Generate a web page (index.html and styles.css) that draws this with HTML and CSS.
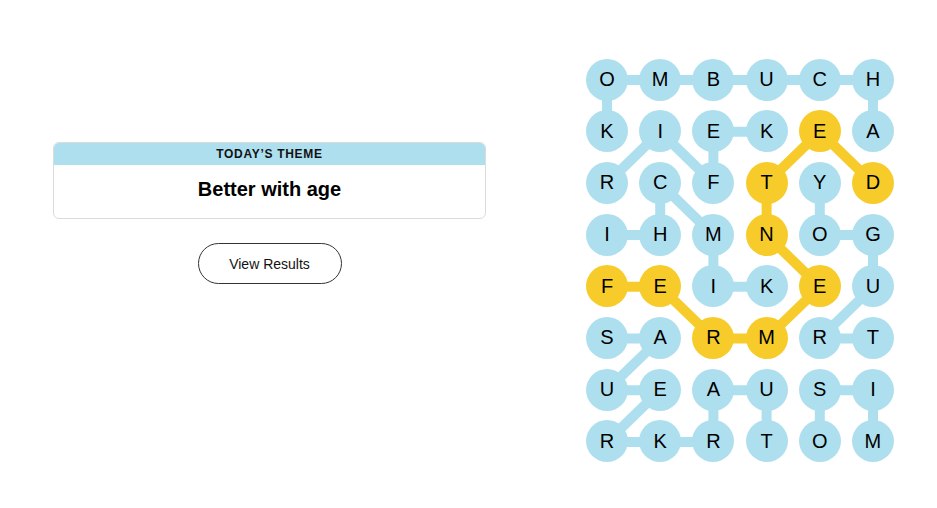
FILE: index.html
```html
<!DOCTYPE html>
<html lang="en">
<head>
<meta charset="utf-8">
<title>Strands</title>
<link rel="stylesheet" href="styles.css">
</head>
<body>
<main class="page">
  <section class="left">
    <div class="card">
      <div class="card-head">TODAY’S THEME</div>
      <div class="card-body">Better with age</div>
    </div>
    <button class="results-btn">View Results</button>
  </section>
  <section class="board">
    <svg class="links" width="308" height="404" viewBox="0 0 308 404">
      <g class="blue">
        <!-- KOMBUCHA -->
        <line x1="21" y1="72.7" x2="21" y2="21"/>
        <line x1="21" y1="21" x2="287" y2="21"/>
        <line x1="287" y1="21" x2="287" y2="72.7"/>
        <!-- KEFIR -->
        <line x1="180.6" y1="72.7" x2="127.4" y2="72.7"/>
        <line x1="127.4" y1="72.7" x2="127.4" y2="124.4"/>
        <line x1="127.4" y1="124.4" x2="74.2" y2="72.7"/>
        <line x1="74.2" y1="72.7" x2="21" y2="124.4"/>
        <!-- KIMCHI -->
        <line x1="180.6" y1="227.8" x2="127.4" y2="227.8"/>
        <line x1="127.4" y1="227.8" x2="127.4" y2="176.1"/>
        <line x1="127.4" y1="176.1" x2="74.2" y2="124.4"/>
        <line x1="74.2" y1="124.4" x2="74.2" y2="176.1"/>
        <line x1="74.2" y1="176.1" x2="21" y2="176.1"/>
        <!-- YOGURT -->
        <line x1="233.8" y1="124.4" x2="233.8" y2="176.1"/>
        <line x1="233.8" y1="176.1" x2="287" y2="176.1"/>
        <line x1="287" y1="176.1" x2="287" y2="227.8"/>
        <line x1="287" y1="227.8" x2="233.8" y2="279.5"/>
        <line x1="233.8" y1="279.5" x2="287" y2="279.5"/>
        <!-- SAUERKRAUT -->
        <line x1="21" y1="279.5" x2="74.2" y2="279.5"/>
        <line x1="74.2" y1="279.5" x2="21" y2="331.2"/>
        <line x1="21" y1="331.2" x2="74.2" y2="331.2"/>
        <line x1="74.2" y1="331.2" x2="21" y2="382.9"/>
        <line x1="21" y1="382.9" x2="127.4" y2="382.9"/>
        <line x1="127.4" y1="382.9" x2="127.4" y2="331.2"/>
        <line x1="127.4" y1="331.2" x2="180.6" y2="331.2"/>
        <line x1="180.6" y1="331.2" x2="180.6" y2="382.9"/>
        <!-- MISO -->
        <line x1="287" y1="382.9" x2="287" y2="331.2"/>
        <line x1="287" y1="331.2" x2="233.8" y2="331.2"/>
        <line x1="233.8" y1="331.2" x2="233.8" y2="382.9"/>
      </g>
      <g class="gold">
        <!-- FERMENTED -->
        <line x1="21" y1="227.8" x2="74.2" y2="227.8"/>
        <line x1="74.2" y1="227.8" x2="127.4" y2="279.5"/>
        <line x1="127.4" y1="279.5" x2="180.6" y2="279.5"/>
        <line x1="180.6" y1="279.5" x2="233.8" y2="227.8"/>
        <line x1="233.8" y1="227.8" x2="180.6" y2="176.1"/>
        <line x1="180.6" y1="176.1" x2="180.6" y2="124.4"/>
        <line x1="180.6" y1="124.4" x2="233.8" y2="72.7"/>
        <line x1="233.8" y1="72.7" x2="287" y2="124.4"/>
      </g>
    </svg>
    <div class="grid">
      <span class="cell">O</span><span class="cell">M</span><span class="cell">B</span><span class="cell">U</span><span class="cell">C</span><span class="cell">H</span>
      <span class="cell">K</span><span class="cell">I</span><span class="cell">E</span><span class="cell">K</span><span class="cell span">E</span><span class="cell">A</span>
      <span class="cell">R</span><span class="cell">C</span><span class="cell">F</span><span class="cell span">T</span><span class="cell">Y</span><span class="cell span">D</span>
      <span class="cell">I</span><span class="cell">H</span><span class="cell">M</span><span class="cell span">N</span><span class="cell">O</span><span class="cell">G</span>
      <span class="cell span">F</span><span class="cell span">E</span><span class="cell">I</span><span class="cell">K</span><span class="cell span">E</span><span class="cell">U</span>
      <span class="cell">S</span><span class="cell">A</span><span class="cell span">R</span><span class="cell span">M</span><span class="cell">R</span><span class="cell">T</span>
      <span class="cell">U</span><span class="cell">E</span><span class="cell">A</span><span class="cell">U</span><span class="cell">S</span><span class="cell">I</span>
      <span class="cell">R</span><span class="cell">K</span><span class="cell">R</span><span class="cell">T</span><span class="cell">O</span><span class="cell">M</span>
    </div>
  </section>
</main>
</body>
</html>
```

FILE: styles.css
```css
html, body {
  margin: 0;
  padding: 0;
  background: #ffffff;
}

body {
  font-family: "Liberation Sans", Arial, sans-serif;
  color: #000;
}

.page {
  display: flex;
  align-items: flex-start;
  padding: 58px 0 0 53px;
  gap: 100px;
}

.left {
  width: 433px;
  margin-top: 84px;
  display: flex;
  flex-direction: column;
  align-items: center;
}

.card {
  width: 100%;
  box-sizing: border-box;
  border: 1px solid #dcdcdc;
  border-radius: 6px;
  overflow: hidden;
}

.card-head {
  background: #aedfee;
  height: 22px;
  line-height: 23px;
  text-align: center;
  font-size: 12px;
  font-weight: 700;
  letter-spacing: 0.7px;
  color: #121212;
}

.card-body {
  height: 53px;
  line-height: 48px;
  text-align: center;
  font-size: 20px;
  font-weight: 700;
  color: #000;
}

.results-btn {
  margin-top: 24px;
  width: 144px;
  height: 41px;
  border: 1px solid #333;
  border-radius: 21px;
  background: #fff;
  font-family: "Liberation Sans", Arial, sans-serif;
  font-size: 14px;
  color: #121212;
  padding: 0;
}

.board {
  position: relative;
  width: 308px;
  height: 404px;
  margin-top: 0.5px;
}

.links {
  position: absolute;
  left: 0;
  top: 0;
  z-index: 0;
}

.links line {
  stroke-width: 10;
  stroke-linecap: butt;
}

.links .blue line {
  stroke: #aedfee;
}

.links .gold line {
  stroke: #f7cc2a;
}

.grid {
  position: relative;
  z-index: 1;
  display: grid;
  grid-template-columns: repeat(6, 42px);
  grid-auto-rows: 42px;
  column-gap: 11.2px;
  row-gap: 9.7px;
}

.cell {
  width: 42px;
  height: 42px;
  border-radius: 50%;
  background: #aedfee;
  display: flex;
  align-items: center;
  justify-content: center;
  font-size: 20px;
  color: #000;
}

.cell.span {
  background: #f7cc2a;
}
```
